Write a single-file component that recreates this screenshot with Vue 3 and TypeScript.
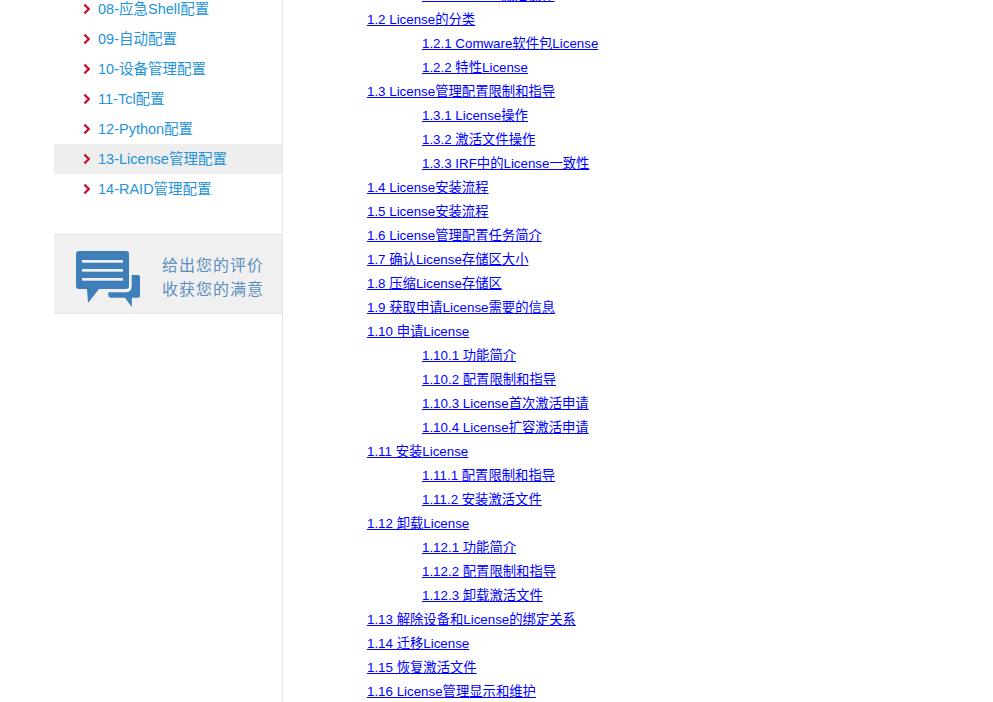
<template>
  <div class="page">
    <aside class="side">
      <ul class="menu">
        <li v-for="m in menu" :key="m" :class="{ on: m === active }">
          <svg class="arrow" width="8" height="12" viewBox="0 0 8 12">
            <path d="M1.4 1.6 L5.8 6 L1.4 10.4" fill="none" stroke="#c8102e" stroke-width="2.2" />
          </svg>
          <a>{{ m }}</a>
        </li>
      </ul>
      <div class="rate">
        <svg class="rate-icon" width="65" height="57" viewBox="0 0 65 57">
          <path d="M3 0 H50 a3 3 0 0 1 3 3 V35 a3 3 0 0 1 -3 3 H23 L12 52 L11 38 H3 a3 3 0 0 1 -3 -3 V3 a3 3 0 0 1 3 -3 Z" fill="#3f7fb9" />
          <rect x="6" y="9" width="41" height="2.7" fill="#f0f0f1" />
          <rect x="6" y="18" width="41" height="2.7" fill="#f0f0f1" />
          <rect x="6" y="27" width="41" height="2.7" fill="#f0f0f1" />
          <path d="M56 24 H62 a2 2 0 0 1 2 2 V44.7 a2 2 0 0 1 -2 2 H56 L55.7 56 L49 46.7 H35 a2.7 2.7 0 0 1 -2.7 -2.7 V41.3 H50 a5.7 5.7 0 0 0 5.7 -5.7 V24 Z" fill="#3f7fb9" />
        </svg>
        <div class="rate-text">给出您的评价<br />收获您的满意</div>
      </div>
    </aside>
    <main class="toc">
      <p v-for="t in toc" :key="t.text" :class="{ sub: t.sub }"><a href="#">{{ t.text }}</a></p>
    </main>
  </div>
</template>

<script setup lang="ts">
const active = '13-License管理配置'
const menu = [
  '08-应急Shell配置',
  '09-自动配置',
  '10-设备管理配置',
  '11-Tcl配置',
  '12-Python配置',
  active,
  '14-RAID管理配置',
]

interface TocItem {
  text: string
  sub?: boolean
}

const toc: TocItem[] = [
  { text: '1.1.3 License激活操作', sub: true },
  { text: '1.2 License的分类' },
  { text: '1.2.1 Comware软件包License', sub: true },
  { text: '1.2.2 特性License', sub: true },
  { text: '1.3 License管理配置限制和指导' },
  { text: '1.3.1 License操作', sub: true },
  { text: '1.3.2 激活文件操作', sub: true },
  { text: '1.3.3 IRF中的License一致性', sub: true },
  { text: '1.4 License安装流程' },
  { text: '1.5 License安装流程' },
  { text: '1.6 License管理配置任务简介' },
  { text: '1.7 确认License存储区大小' },
  { text: '1.8 压缩License存储区' },
  { text: '1.9 获取申请License需要的信息' },
  { text: '1.10 申请License' },
  { text: '1.10.1 功能简介', sub: true },
  { text: '1.10.2 配置限制和指导', sub: true },
  { text: '1.10.3 License首次激活申请', sub: true },
  { text: '1.10.4 License扩容激活申请', sub: true },
  { text: '1.11 安装License' },
  { text: '1.11.1 配置限制和指导', sub: true },
  { text: '1.11.2 安装激活文件', sub: true },
  { text: '1.12 卸载License' },
  { text: '1.12.1 功能简介', sub: true },
  { text: '1.12.2 配置限制和指导', sub: true },
  { text: '1.12.3 卸载激活文件', sub: true },
  { text: '1.13 解除设备和License的绑定关系' },
  { text: '1.14 迁移License' },
  { text: '1.15 恢复激活文件' },
  { text: '1.16 License管理显示和维护' },
]
</script>

<style>
html,
body {
  margin: 0;
  overflow: hidden;
  background: #fff;
}
</style>

<style scoped>
.page {
  display: flex;
  height: 702px;
  overflow: hidden;
  font-family: "Liberation Sans", "Noto Sans CJK SC", sans-serif;
}

.side {
  box-sizing: border-box;
  width: 229px;
  margin-left: 54px;
  border-right: 1px solid #e6e6e6;
  flex-shrink: 0;
}

.menu {
  list-style: none;
  margin: -6px 0 0;
  padding: 0;
}

.menu li {
  display: flex;
  align-items: center;
  height: 30px;
  padding-left: 29px;
}

.menu li.on {
  background: #eee;
}

.arrow {
  margin-right: 7px;
}

.menu a {
  margin-top: -4px;
  font-size: 14.5px;
  color: #2593d9;
}

.rate {
  display: flex;
  align-items: center;
  box-sizing: border-box;
  height: 80px;
  margin-top: 30px;
  padding-left: 22px;
  background: #f0f0f1;
  border-top: 1px solid #e6e6e6;
  border-bottom: 1px solid #e6e6e6;
}

.rate-icon {
  margin-top: 11px;
}

.rate-text {
  margin-top: 8px;
  margin-left: 21px;
  font-size: 16px;
  line-height: 24px;
  letter-spacing: 1px;
  color: #5b8fbf;
}

.toc {
  flex: 1;
  margin-top: -16px;
  padding-left: 84px;
  font-size: 13.33px;
}

.toc p {
  margin: 0;
  height: 24px;
  line-height: 24px;
}

.toc p.sub {
  padding-left: 55px;
}

.toc a {
  color: #00f;
}
</style>
